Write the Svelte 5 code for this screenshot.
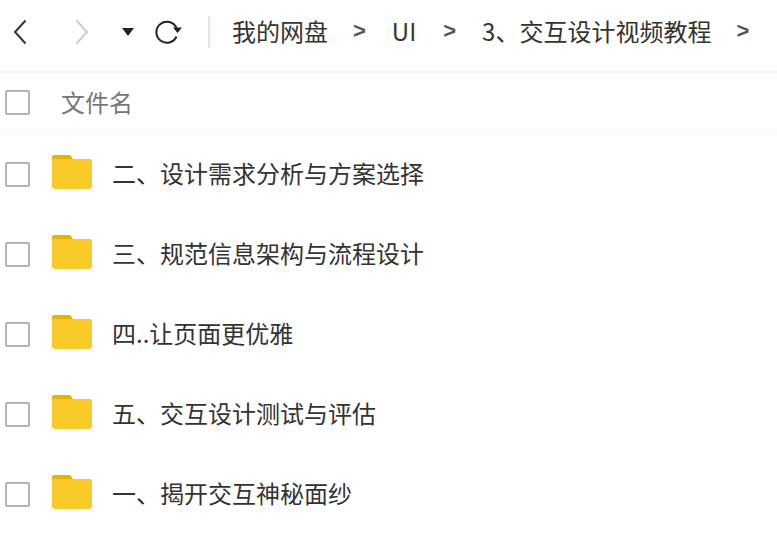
<script>
  const crumbs = [
    { label: '我的网盘', cls: 'c1' },
    { label: 'UI', cls: 'c2' },
    { label: '3、交互设计视频教程', cls: 'c3' }
  ];
  const rows = ['二、设计需求分析与方案选择', '三、规范信息架构与流程设计', '四..让页面更优雅', '五、交互设计测试与评估', '一、揭开交互神秘面纱'];
</script>

<div class="page">
  <header class="toolbar">
    <svg class="back" width="18" height="26" viewBox="0 0 18 26"><path d="M15.500 1.500 L5 13 L15.500 24.500" fill="none" stroke="#333" stroke-width="2"/></svg>
    <svg class="forward" width="18" height="26" viewBox="0 0 18 26"><path d="M3.500 1.500 L14 13 L3.500 24.500" fill="none" stroke="#ccc" stroke-width="2"/></svg>
    <svg class="caret" width="12" height="8" viewBox="0 0 12 8"><path d="M0 0 H12 L6 8 Z" fill="#222"/></svg>
    <svg class="reload" width="28" height="24" viewBox="0 0 28 24"><path d="M21.500 8 A10.500 10.500 0 1 0 21.500 16.500" fill="none" stroke="#222" stroke-width="2"/><path d="M18 7.500 H27 L22.500 13 Z" fill="#222"/></svg>
    <span class="divider"></span>
    {#each crumbs as c}
      <span class="crumb {c.cls}">{c.label}</span>
      <span class="sep">&gt;</span>
    {/each}
  </header>

  <div class="head">
    <span class="check"></span>
    <span class="head-label">文件名</span>
  </div>

  <ul class="list">
    {#each rows as name}
      <li class="row">
        <span class="check"></span>
        <svg class="folder" width="40" height="34" viewBox="0 0 40 34">
          <path d="M0 2 Q0 0 2 0 H18 L21 4 H2 Q0 4 0 6 Z" fill="#e6b400"/>
          <path d="M0 6 Q0 4 2 4 H38 Q40 4 40 6 V31 Q40 34 37 34 H3 Q0 34 0 31 Z" fill="#f8ca2a"/>
        </svg>
        <span class="name">{name}</span>
      </li>
    {/each}
  </ul>
</div>

<style>
  :global(body) {
    margin: 0;
    background: #fff;
  }
  .page {
    width: 777px;
    height: 558px;
    overflow: hidden;
    font-family: "Noto Sans CJK SC", "Liberation Sans", sans-serif;
    font-size: 24px;
    color: #333;
  }
  .toolbar {
    box-sizing: border-box;
    height: 73px;
    display: flex;
    align-items: center;
    border-bottom: 2px solid #f1f1f1;
    padding: 0 0 7px 10px;
    white-space: nowrap;
  }
  .forward { margin-left: 45px; }
  .caret { margin-left: 31px; }
  .reload { margin-left: 21px; }
  .divider {
    width: 2px;
    height: 32px;
    background: #e4e4e4;
    margin-left: 25px;
    margin-right: 22px;
  }
  .crumb {
    line-height: 32px;
    margin-bottom: 3px;
  }
  .sep {
    font-size: 22px;
    font-weight: 700;
    color: #555;
    font-family: "Liberation Sans", sans-serif;
    margin-bottom: 2px;
  }
  .c1 + .sep { margin-left: 25px; margin-right: 26px; }
  .c2 + .sep { margin-left: 27px; margin-right: 26px; }
  .c3 + .sep { margin-left: 25px; }
  .head {
    height: 58px;
    display: flex;
    align-items: center;
    gap: 31px;
    padding-left: 5px;
    border-bottom: 1px solid #f6f6f6;
  }
  .head-label {
    color: #777;
    margin-bottom: 2px;
  }
  .check {
    width: 21px;
    height: 21px;
    border: 2px solid #b4b4b4;
    border-radius: 2px;
    flex: none;
    box-sizing: content-box;
  }
  .list {
    list-style: none;
    margin: 0;
    padding: 0;
  }
  .row {
    height: 80px;
    display: flex;
    align-items: center;
    padding-left: 5px;
  }
  .row .check { margin-top: 4px; }
  .folder { margin-left: 22px; flex: none; }
  .name {
    margin-left: 20px;
    line-height: 32px;
    margin-top: 2px;
  }
</style>
